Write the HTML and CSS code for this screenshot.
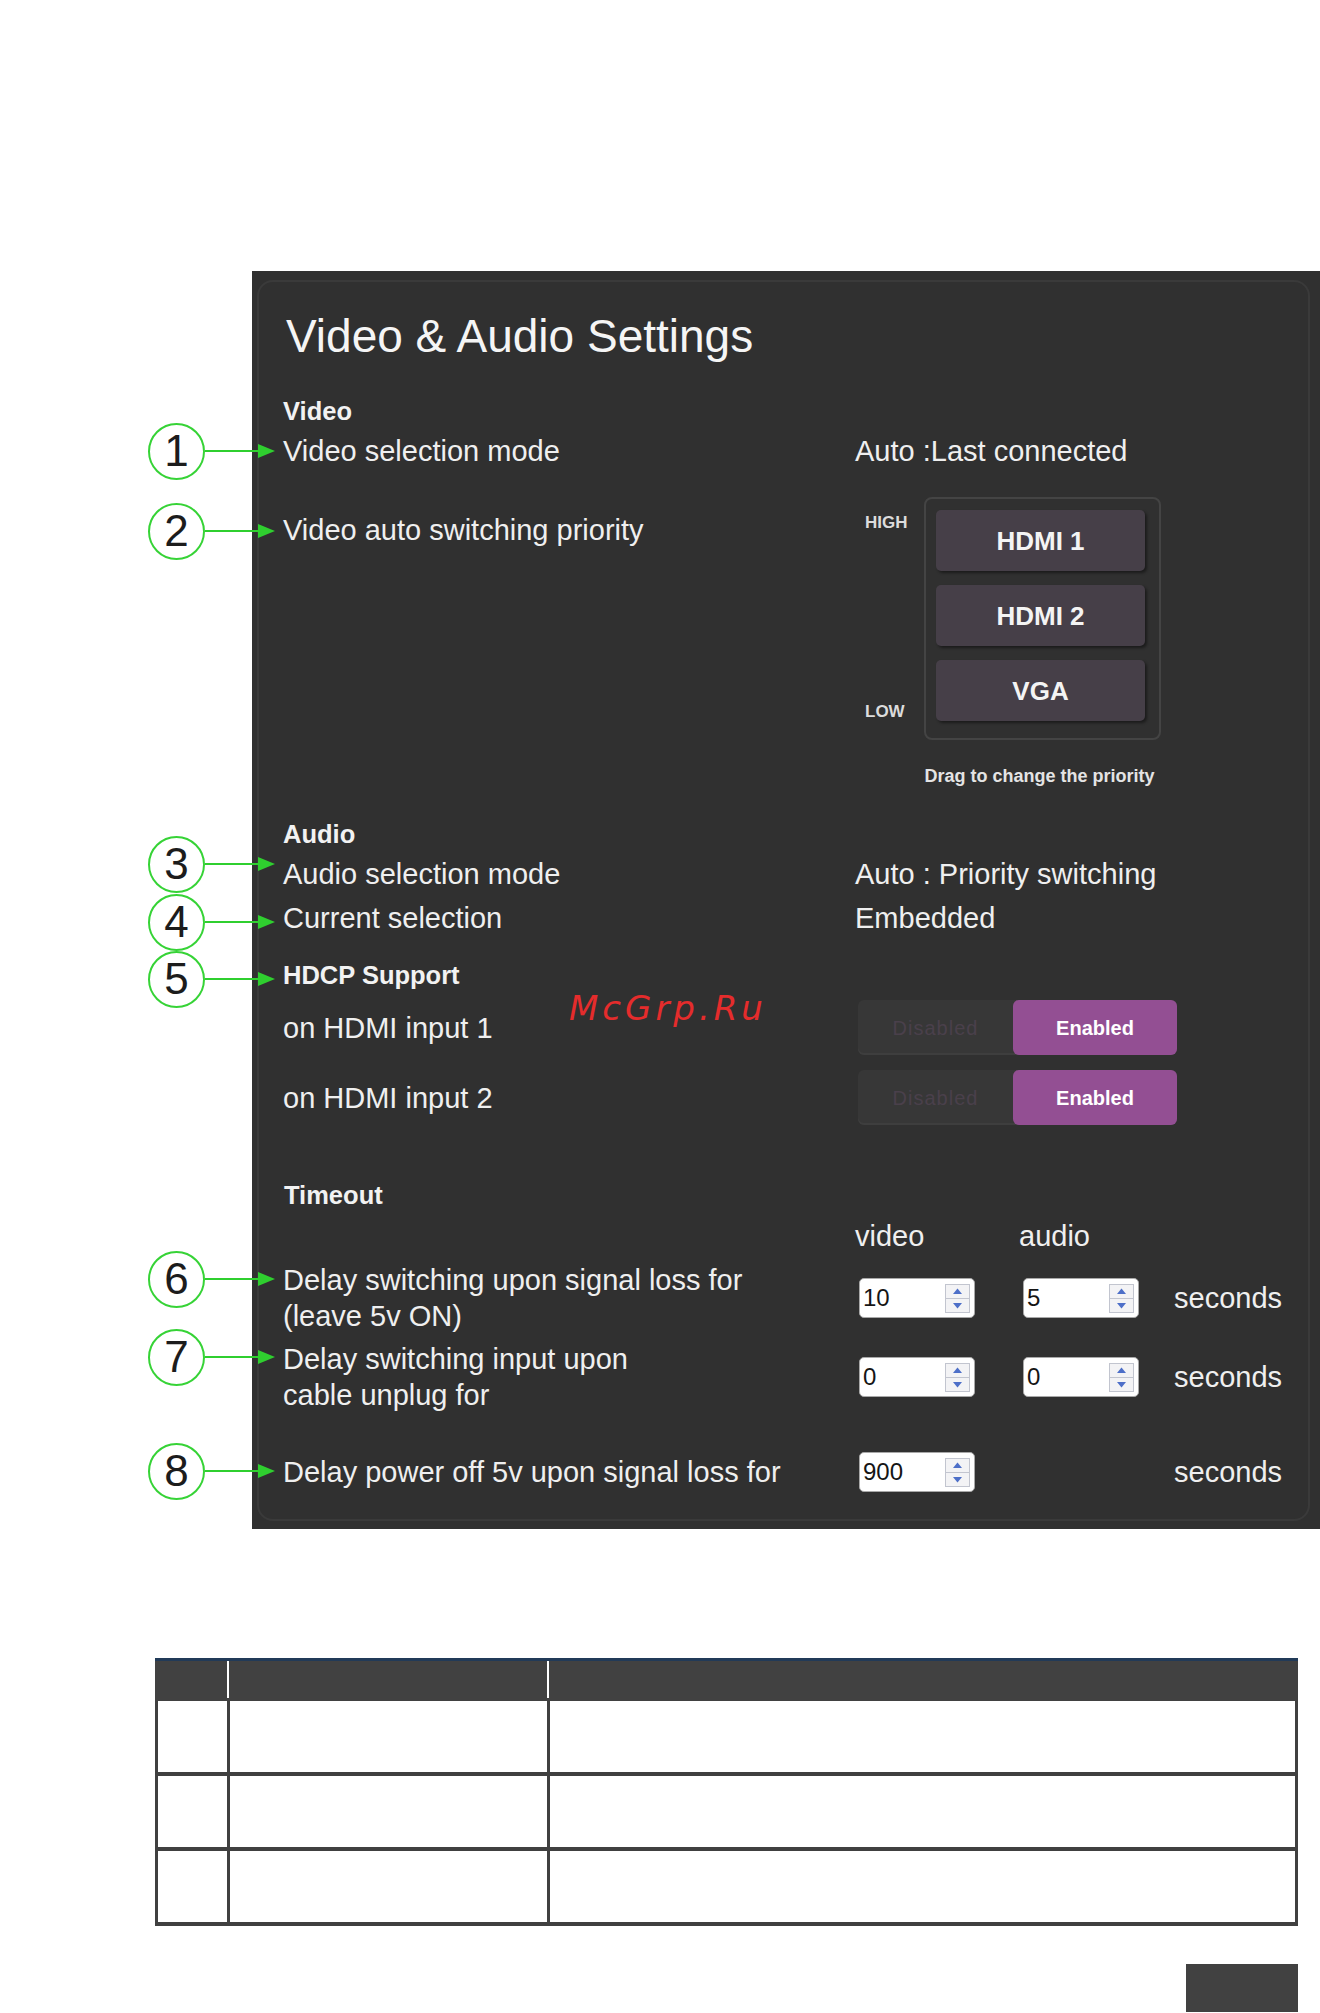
FILE: index.html
```html
<!DOCTYPE html>
<html>
<head>
<meta charset="utf-8">
<title>Video &amp; Audio Settings</title>
<link rel="stylesheet" href="styles.css">
</head>
<body>
<div class="page">
  <div class="panel">
    <div class="inner">
      <h1 class="title">Video &amp; Audio Settings</h1>

      <div class="sect sect-video">Video</div>
      <div class="row r1">
        <div class="label">
          <span class="callout"><span class="num">1</span><svg class="arrow" width="70" height="16" viewBox="0 0 70 16"><line x1="0" y1="8" x2="56" y2="8" stroke="#2fcf2f" stroke-width="2"/><polygon points="53,1 70,8 53,15" fill="#2fcf2f"/></svg></span>
          Video selection mode
        </div>
        <div class="value">Auto :Last connected</div>
      </div>

      <div class="row r2">
        <div class="label label-pad">
          <span class="callout callout-pad"><span class="num">2</span><svg class="arrow" width="70" height="16" viewBox="0 0 70 16"><line x1="0" y1="8" x2="56" y2="8" stroke="#2fcf2f" stroke-width="2"/><polygon points="53,1 70,8 53,15" fill="#2fcf2f"/></svg></span>
          Video auto switching priority
        </div>
        <div class="value">
          <div class="prio">
            <div class="prio-ends"><span>HIGH</span><span>LOW</span></div>
            <div class="prio-box">
              <div class="prio-btn">HDMI 1</div>
              <div class="prio-btn">HDMI 2</div>
              <div class="prio-btn">VGA</div>
            </div>
          </div>
          <div class="prio-hint">Drag to change the priority</div>
        </div>
      </div>

      <div class="sect sect-audio">Audio</div>
      <div class="row r3">
        <div class="label">
          <span class="callout callout-up"><span class="num">3</span><svg class="arrow" width="70" height="16" viewBox="0 0 70 16"><line x1="0" y1="8" x2="56" y2="8" stroke="#2fcf2f" stroke-width="2"/><polygon points="53,1 70,8 53,15" fill="#2fcf2f"/></svg></span>
          Audio selection mode
        </div>
        <div class="value">Auto : Priority switching</div>
      </div>
      <div class="row r4">
        <div class="label">
          <span class="callout callout-down"><span class="num">4</span><svg class="arrow" width="70" height="16" viewBox="0 0 70 16"><line x1="0" y1="8" x2="56" y2="8" stroke="#2fcf2f" stroke-width="2"/><polygon points="53,1 70,8 53,15" fill="#2fcf2f"/></svg></span>
          Current selection
        </div>
        <div class="value">Embedded</div>
      </div>

      <div class="sect sect-hdcp">
        <span class="callout callout-sect"><span class="num">5</span><svg class="arrow" width="70" height="16" viewBox="0 0 70 16"><line x1="0" y1="8" x2="56" y2="8" stroke="#2fcf2f" stroke-width="2"/><polygon points="53,1 70,8 53,15" fill="#2fcf2f"/></svg></span>
        HDCP Support
      </div>
      <div class="row trow t1">
        <div class="label">on HDMI input 1</div>
        <div class="value"><div class="toggle"><span class="off">Disabled</span><span class="on">Enabled</span></div></div>
      </div>
      <div class="row trow t2">
        <div class="label">on HDMI input 2</div>
        <div class="value"><div class="toggle"><span class="off">Disabled</span><span class="on">Enabled</span></div></div>
      </div>

      <div class="sect sect-timeout">Timeout</div>
      <div class="row heads">
        <div class="label"></div>
        <div class="value tgrid tgrid-heads"><span>video</span><span>audio</span><span></span></div>
      </div>
      <div class="row two r6">
        <div class="label">
          <span class="callout callout-two"><span class="num">6</span><svg class="arrow" width="70" height="16" viewBox="0 0 70 16"><line x1="0" y1="8" x2="56" y2="8" stroke="#2fcf2f" stroke-width="2"/><polygon points="53,1 70,8 53,15" fill="#2fcf2f"/></svg></span>
          Delay switching upon signal loss for<br>(leave 5v ON)
        </div>
        <div class="value tgrid">
          <div class="num-input"><span class="val">10</span><svg class="spin" width="25" height="29" viewBox="0 0 25 29"><rect x="0.5" y="0.5" width="24" height="28" fill="#f3f3f5" stroke="#c2c5cf"/><line x1="1" y1="14.5" x2="24" y2="14.5" stroke="#c2c5cf"/><polygon points="12.5,4.5 17,10 8,10" fill="#4d6fc8"/><polygon points="12.5,24.5 17,19 8,19" fill="#4d6fc8"/></svg></div>
          <div class="num-input"><span class="val">5</span><svg class="spin" width="25" height="29" viewBox="0 0 25 29"><rect x="0.5" y="0.5" width="24" height="28" fill="#f3f3f5" stroke="#c2c5cf"/><line x1="1" y1="14.5" x2="24" y2="14.5" stroke="#c2c5cf"/><polygon points="12.5,4.5 17,10 8,10" fill="#4d6fc8"/><polygon points="12.5,24.5 17,19 8,19" fill="#4d6fc8"/></svg></div>
          <span class="unit">seconds</span>
        </div>
      </div>
      <div class="row two r7">
        <div class="label">
          <span class="callout callout-two7"><span class="num">7</span><svg class="arrow" width="70" height="16" viewBox="0 0 70 16"><line x1="0" y1="8" x2="56" y2="8" stroke="#2fcf2f" stroke-width="2"/><polygon points="53,1 70,8 53,15" fill="#2fcf2f"/></svg></span>
          Delay switching input upon<br>cable unplug for
        </div>
        <div class="value tgrid">
          <div class="num-input"><span class="val">0</span><svg class="spin" width="25" height="29" viewBox="0 0 25 29"><rect x="0.5" y="0.5" width="24" height="28" fill="#f3f3f5" stroke="#c2c5cf"/><line x1="1" y1="14.5" x2="24" y2="14.5" stroke="#c2c5cf"/><polygon points="12.5,4.5 17,10 8,10" fill="#4d6fc8"/><polygon points="12.5,24.5 17,19 8,19" fill="#4d6fc8"/></svg></div>
          <div class="num-input"><span class="val">0</span><svg class="spin" width="25" height="29" viewBox="0 0 25 29"><rect x="0.5" y="0.5" width="24" height="28" fill="#f3f3f5" stroke="#c2c5cf"/><line x1="1" y1="14.5" x2="24" y2="14.5" stroke="#c2c5cf"/><polygon points="12.5,4.5 17,10 8,10" fill="#4d6fc8"/><polygon points="12.5,24.5 17,19 8,19" fill="#4d6fc8"/></svg></div>
          <span class="unit">seconds</span>
        </div>
      </div>
      <div class="row two r8">
        <div class="label">
          <span class="callout callout-two"><span class="num">8</span><svg class="arrow" width="70" height="16" viewBox="0 0 70 16"><line x1="0" y1="8" x2="56" y2="8" stroke="#2fcf2f" stroke-width="2"/><polygon points="53,1 70,8 53,15" fill="#2fcf2f"/></svg></span>
          Delay power off 5v upon signal loss for
        </div>
        <div class="value tgrid">
          <div class="num-input"><span class="val">900</span><svg class="spin" width="25" height="29" viewBox="0 0 25 29"><rect x="0.5" y="0.5" width="24" height="28" fill="#f3f3f5" stroke="#c2c5cf"/><line x1="1" y1="14.5" x2="24" y2="14.5" stroke="#c2c5cf"/><polygon points="12.5,4.5 17,10 8,10" fill="#4d6fc8"/><polygon points="12.5,24.5 17,19 8,19" fill="#4d6fc8"/></svg></div>
          <span></span>
          <span class="unit">seconds</span>
        </div>
      </div>
    </div>
    <div class="wm">McGrp.Ru</div>
  </div>

  <div class="tbl">
    <div class="thead"><div class="th"></div><div class="th sep"></div><div class="th sep"></div></div>
    <div class="tr"><div class="td"></div><div class="td sep"></div><div class="td sep"></div></div>
    <div class="tr"><div class="td"></div><div class="td sep"></div><div class="td sep"></div></div>
    <div class="tr"><div class="td"></div><div class="td sep"></div><div class="td sep"></div></div>
  </div>

  <div class="pagetab"></div>
</div>
</body>
</html>
```

FILE: styles.css
```css
* { box-sizing: border-box; }
html, body { margin: 0; padding: 0; }
body {
  width: 1320px;
  height: 2013px;
  overflow: hidden;
  background: #ffffff;
  font-family: "Liberation Sans", Arial, sans-serif;
  color: #efefef;
}
.page { padding-top: 271px; }

.panel {
  position: relative;
  margin-left: 252px;
  width: 1068px;
  height: 1258px;
  background: #303030;
  padding: 9px 10px 8px 5px;
  display: flex;
  flex-direction: column;
}
.inner {
  flex: 1;
  border: 2px solid #3a3a3a;
  border-radius: 16px;
  padding: 28px 0 0 24px;
}
.title {
  margin: 0;
  padding-left: 3px;
  font-size: 46px;
  line-height: 52px;
  height: 52px;
  font-weight: normal;
  color: #f5f5f5;
  white-space: nowrap;
}

.sect {
  position: relative;
  font-size: 25.5px;
  font-weight: bold;
  line-height: 28px;
  height: 28px;
  color: #f2f2f2;
}
.sect-video { margin-top: 35px; }
.sect-audio { margin-top: 33px; }
.sect-hdcp { margin-top: 26px; }
.sect-timeout { margin-top: 56px; padding-left: 1px; }

.row {
  display: grid;
  grid-template-columns: 572px 1fr;
  font-size: 29px;
  line-height: 34px;
  align-items: start;
}
.row.two { line-height: 36px; align-items: center; }
.label { position: relative; white-space: nowrap; }
.label-pad { padding-top: 16px; }
.value { white-space: nowrap; }

.r1 { margin-top: 9px; }
.r2 { margin-top: 29px; }
.r3 { margin-top: 9px; }
.r4 { margin-top: 10px; }
.t1 { margin-top: 11px; }
.t2 { margin-top: 15px; }
.trow { align-items: center; }
.heads { margin-top: 10px; }
.r6 { margin-top: 9px; }
.r7 { margin-top: 7px; }
.r8 { margin-top: 39px; }

/* callouts */
.callout {
  position: absolute;
  right: calc(100% + 8px);
  top: -11.5px;
  width: 127px;
  height: 57px;
  display: flex;
  align-items: center;
}
.callout-pad { top: 5.5px; }
.callout-up { top: -21.5px; }
.callout-down { top: -7.5px; }
.callout-sect { top: -10.5px; }
.callout-two { top: -11.5px; }
.callout-two7 { top: -12.5px; }
.num {
  flex: none;
  width: 57px;
  height: 57px;
  border: 2px solid #36d336;
  border-radius: 50%;
  display: flex;
  align-items: center;
  justify-content: center;
  font-size: 44px;
  line-height: 1;
  font-weight: normal;
  color: #1c1c1c;
  background: #ffffff;
}
.arrow { flex: none; display: block; }

/* priority */
.prio { display: flex; }
.prio-ends {
  width: 69px;
  height: 243px;
  padding: 16px 0 18px 10px;
  display: flex;
  flex-direction: column;
  justify-content: space-between;
  font-size: 17px;
  font-weight: bold;
  line-height: 20px;
  color: #dcdcdc;
}
.prio-box {
  width: 237px;
  height: 243px;
  border: 2px solid #444444;
  border-radius: 8px;
  padding: 11px 14px 0 10px;
  display: flex;
  flex-direction: column;
  gap: 14px;
}
.prio-btn {
  height: 61px;
  background: #463f48;
  border-radius: 5px;
  box-shadow: 2px 2px 3px rgba(0, 0, 0, 0.45);
  display: flex;
  align-items: center;
  justify-content: center;
  font-size: 26px;
  font-weight: bold;
  color: #f4f4f4;
}
.prio-hint {
  margin-top: 25px;
  margin-left: 66px;
  width: 237px;
  text-align: center;
  font-size: 18px;
  font-weight: bold;
  line-height: 22px;
  color: #e4e4e4;
}

/* toggles */
.toggle {
  margin-left: 3px;
  width: 319px;
  height: 55px;
  display: flex;
  border-radius: 6px;
  background: #373737;
  box-shadow: inset 0 -2px 0 #3e3e3e;
}
.off {
  width: 155px;
  display: flex;
  align-items: center;
  justify-content: center;
  font-size: 20px;
  letter-spacing: 1px;
  color: #4a404b;
}
.on {
  flex: 1;
  background: #934f93;
  border-radius: 6px;
  display: flex;
  align-items: center;
  justify-content: center;
  font-size: 20px;
  font-weight: bold;
  color: #ffffff;
}

/* timeout */
.tgrid {
  display: grid;
  grid-template-columns: 164px 151px auto;
  padding-left: 4px;
  align-items: center;
}
.tgrid-heads { padding-left: 0; }
.num-input {
  width: 116px;
  height: 40px;
  background: #ffffff;
  border: 1px solid #a8a8a8;
  border-radius: 5px;
  display: flex;
  align-items: center;
  justify-content: space-between;
  padding: 0 4px 0 3px;
  font-size: 24px;
  line-height: 28px;
  color: #151515;
}
.spin { display: block; }
.unit { font-size: 29px; }

/* watermark */
.wm {
  position: absolute;
  left: 317px;
  top: 717px;
  font-family: "DejaVu Sans", sans-serif;
  font-style: italic;
  font-size: 34px;
  line-height: 40px;
  letter-spacing: 4px;
  color: #e52c2c;
}

/* table */
.tbl {
  margin-top: 129px;
  margin-left: 155px;
  width: 1143px;
}
.thead {
  display: grid;
  grid-template-columns: 72px 320px 1fr;
  height: 43px;
  background: #414141;
  border-top: 3px solid #213a58;
  padding-bottom: 3px;
}
.th.sep { border-left: 2px solid #ffffff; }
.tr {
  display: grid;
  grid-template-columns: 69px 320px 1fr;
  height: 75px;
  border-left: 3px solid #404040;
  border-right: 3px solid #404040;
  border-bottom: 4px solid #404040;
}
.td.sep { border-left: 3px solid #404040; }

.pagetab {
  margin-top: 38px;
  margin-left: 1186px;
  width: 112px;
  height: 48px;
  background: #414141;
}
```
